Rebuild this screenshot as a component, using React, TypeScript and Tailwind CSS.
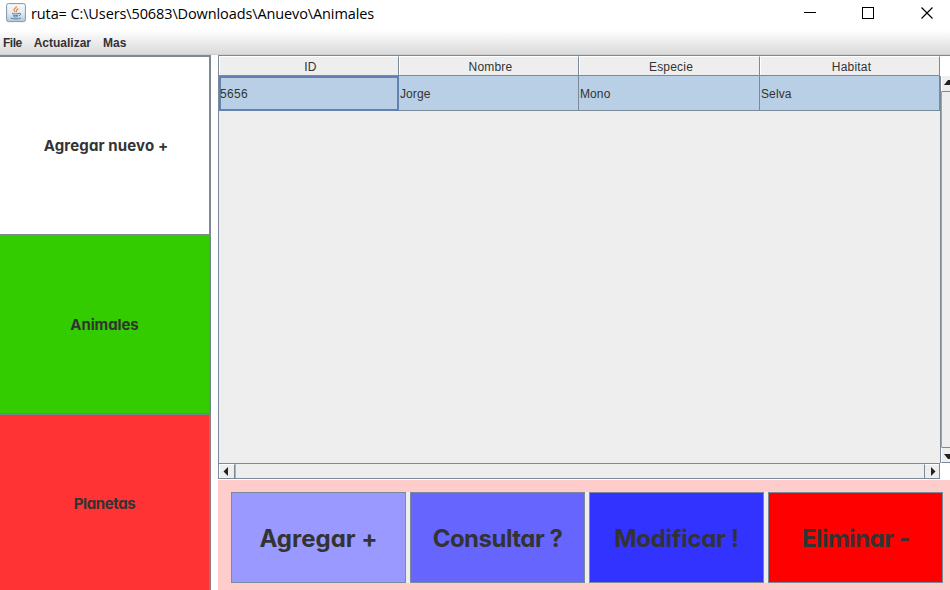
import React from 'react';

const sidebar = [
  { label: 'Agregar nuevo +', box: 'h-[181px] border-t-2 bg-white border-[#7f8995]', text: 'tracking-[0.12px] pl-[3px]' },
  { label: 'Animales', box: 'h-[179px] bg-[#33cc00] border-[#6b8a80]', text: 'tracking-[-0.1px]' },
  { label: 'Planetas', box: 'h-[179px] bg-[#ff3333] border-[#94787c]', text: 'tracking-[-0.4px]' },
];

const columns = [
  { title: 'ID', value: '5656', width: 'w-[180px]' },
  { title: 'Nombre', value: 'Jorge', width: 'w-[180px]' },
  { title: 'Especie', value: 'Mono', width: 'w-[181px]' },
  { title: 'Habitat', value: 'Selva', width: 'w-[180px]' },
];

const actions = [
  { label: 'Agregar +', color: 'bg-[#9999ff]', text: 'tracking-[0px]' },
  { label: 'Consultar ?', color: 'bg-[#6666ff]', text: 'tracking-[-0.5px]' },
  { label: 'Modificar !', color: 'bg-[#3333ff]', text: 'tracking-[-0.3px]' },
  { label: 'Eliminar -', color: 'bg-[#ff0000]', text: 'tracking-[-0.5px]' },
];

const gothic = "font-['Inter',sans-serif] font-bold text-[#333333] whitespace-pre [font-feature-settings:'cv11']";

function JavaIcon() {
  return (
    <svg width="20" height="20" viewBox="0 0 20 20" fill="none">
      <defs>
        <linearGradient id="tile" x1="0" y1="0" x2="0" y2="1">
          <stop offset="0" stopColor="#f8fafb" />
          <stop offset="0.55" stopColor="#e2e9ef" />
          <stop offset="1" stopColor="#b4c7d8" />
        </linearGradient>
      </defs>
      <rect x="0.6" y="0.6" width="18.8" height="18" rx="1.8" fill="url(#tile)" stroke="#8295a8" />
      <path d="M10.3 3.2C11 5 7.4 5.6 8 7.2c.3.8 1.1 1.2 1.1 2.1M12.4 5.6c-3.1 1.3-1.1 2-2.1 3.5" stroke="#e68a45" strokeWidth="1.2" />
      <path d="M6 10.3c1.8.8 5.4.8 7.2 0M6.8 12.1c1.8.6 4.2.6 5.6 0M7.4 13.7c1.4.4 3 .4 4.4 0M13.2 10.5c2.1-.8 2.1 1.6-.2 2.2M4.8 15c2.5 1.3 7.8 1.3 10.2-.1" stroke="#587fa5" strokeWidth="1" />
    </svg>
  );
}

function TitleBar() {
  return (
    <header className="flex h-[30px] shrink-0 items-start bg-white pl-[6px]">
      <div className="pt-[3px]"><JavaIcon /></div>
      <h1 className="ml-[5px] pt-[4px] font-['Open_Sans','Noto_Sans',sans-serif] text-[14.5px] leading-[20px] font-normal tracking-[-0.11px] whitespace-pre text-black">ruta= C:\Users\50683\Downloads\Anuevo\Animales</h1>
      <svg className="ml-auto" width="150" height="30" fill="none" stroke="#000" strokeWidth="1" shapeRendering="crispEdges">
        <path d="M4 12.5H16M62.5 7.5H73.5V18.5H62.5Z" />
        <path d="M121.5 7.5L132.5 18.5M132.5 7.5L121.5 18.5" shapeRendering="auto" strokeWidth="1.2" />
      </svg>
    </header>
  );
}

function MenuBar() {
  return (
    <nav className="flex h-[25px] shrink-0 gap-[12px] border-b border-[#cfcfcf] bg-linear-to-b from-white to-[#dadada] pl-[3px] font-['Liberation_Sans',Arial,sans-serif] text-[12px] leading-[26px] font-bold text-[#333333]">
      <span className="tracking-[-0.5px]">File</span>
      <span>Actualizar</span>
      <span>Mas</span>
    </nav>
  );
}

function DataTable() {
  return (
    <div className="w-[722px] shrink-0 border-l border-[#7a8a99] bg-[#eeeeee] font-['Liberation_Sans',Arial,sans-serif] text-[12px] text-[#333333]">
      <div className="flex h-[20px] border-b border-[#7a8a99]">
        {columns.map((c) => (
          <div key={c.title} className={`${c.width} border-t border-r border-l border-t-white border-r-[#7a8a99] border-l-white pl-[3px] text-center leading-[20px] tracking-[0.2px]`}>{c.title}</div>
        ))}
      </div>
      <div className="flex h-[35px] bg-[#b8cfe5]">
        {columns.map((c, i) => (
          <div key={c.title} className={`${c.width} ${i === 0 ? 'border-2 border-[#6382b0] leading-[32px]' : 'border-r border-b border-[#7a8a99] pl-px leading-[36px]'}`}>
            <span className={i === 0 ? '-ml-px block tracking-[0.3px]' : 'block tracking-[0.1px]'}>{c.value}</span>
          </div>
        ))}
      </div>
    </div>
  );
}

function VerticalScroll() {
  return (
    <div className="flex grow flex-col">
      <div className="h-[20px] bg-white" />
      <div className="flex grow flex-col border-l border-[#7a8a99] bg-[#eeeeee]">
        <div className="h-[16px] border-b border-l border-b-[#7a8a99] border-l-white">
          <svg width="8" height="14"><path d="M2 9h8V4H6Z" fill="#222" /></svg>
        </div>
        <div className="grow border-l border-[#8aa6c8]" />
        <div className="h-[16px] border-t border-b border-l border-y-[#7a8a99] border-l-white">
          <svg width="8" height="14"><path d="M2 6h8V11H6Z" fill="#222" /></svg>
        </div>
      </div>
    </div>
  );
}

function HorizontalScroll() {
  return (
    <div className="flex h-[17px] shrink-0 bg-white pb-px">
      <div className="flex w-[722px] border border-[#7a8a99] bg-[#eeeeee]">
        <div className="w-[16px] border-t border-r border-l border-t-white border-r-[#7a8a99] border-l-white">
          <svg width="14" height="13"><path d="M8 2v9L3.5 6.5Z" fill="#222" /></svg>
        </div>
        <div className="grow border-l border-[#9db4d0]" />
        <div className="w-[15px] border-t border-l border-t-white border-l-[#7a8a99]">
          <svg width="14" height="13"><path d="M6 2v9L10.5 6.5Z" fill="#222" /></svg>
        </div>
      </div>
    </div>
  );
}

function ActionBar() {
  return (
    <footer className="h-[110px] shrink-0 bg-[#ffcccc] pt-[12px] pl-[13px]">
      <div className="flex h-[91px] w-[712px] gap-[4px] bg-[#eeeeee]">
        {actions.map((a) => (
          <button key={a.label} className={`flex w-[175px] items-center justify-center border border-[#7a8a99] pt-[2px] text-[24px] ${gothic} ${a.color}`}>
            <span className={a.text}>{a.label}</span>
          </button>
        ))}
      </div>
    </footer>
  );
}

export default function App() {
  return (
    <div className="flex h-[590px] w-[950px] flex-col overflow-hidden bg-white">
      <TitleBar />
      <MenuBar />
      <div className="flex min-h-0 grow">
        <aside className="w-[211px] shrink-0">
          {sidebar.map((s) => (
            <button key={s.label} className={`flex w-full items-center justify-center border-r-2 border-b-2 pt-[2px] text-[15px] ${gothic} ${s.box}`}>
              <span className={s.text}>{s.label}</span>
            </button>
          ))}
        </aside>
        <main className="ml-[7px] flex grow flex-col">
          <div className="flex min-h-0 grow border-t border-[#7a8a99]">
            <DataTable />
            <VerticalScroll />
          </div>
          <HorizontalScroll />
          <ActionBar />
        </main>
      </div>
    </div>
  );
}
